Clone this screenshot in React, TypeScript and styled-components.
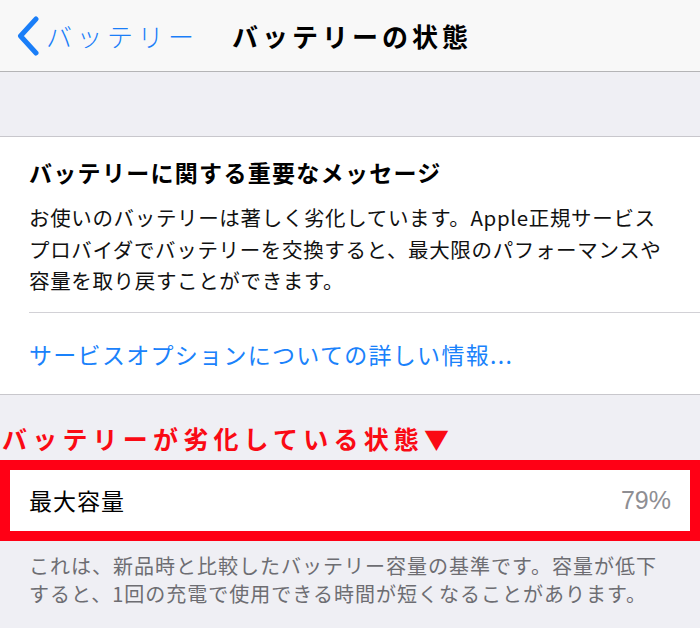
import React from "react";
import styled, { createGlobalStyle } from "styled-components";

const GlobalStyle = createGlobalStyle`
  html, body {
    margin: 0;
    padding: 0;
    background: #efeff4;
  }
  body {
    font-family: "Noto Sans CJK JP", "Noto Sans", "Liberation Sans", sans-serif;
    -webkit-font-smoothing: antialiased;
  }
`;

const Page = styled.div`
  width: 700px;
  height: 628px;
  overflow: hidden;
  background: #efeff4;
  display: flex;
  flex-direction: column;
`;

const NavBar = styled.header`
  height: 71px;
  flex: none;
  background: #f8f8f8;
  border-bottom: 1px solid #b4b4b6;
  display: flex;
  align-items: center;
  padding-left: 16px;
`;

const BackButton = styled.div`
  display: flex;
  align-items: center;
  gap: 6px;
  color: #1a7ef8;
  width: 216px;
  flex: none;
`;

const BackLabel = styled.span`
  font-size: 26px;
  font-weight: 300;
  letter-spacing: 4.5px;
  line-height: 1;
`;

const Title = styled.h1`
  margin: 0;
  font-size: 26px;
  font-weight: 700;
  letter-spacing: 4px;
  color: #000;
  line-height: 1;
`;

const Spacer = styled.div<{ $h: number }>`
  height: ${(p) => p.$h}px;
  flex: none;
`;

const Card = styled.section`
  background: #fff;
  border-top: 1px solid #c8c7cc;
  border-bottom: 1px solid #c8c7cc;
  padding-left: 29px;
  flex: none;
`;

const MessageBlock = styled.div`
  padding: 18px 0 15px;
`;

const Heading = styled.h2`
  margin: 0;
  font-size: 23px;
  font-weight: 700;
  line-height: 34px;
  color: #000;
  letter-spacing: 1.3px;
`;

const Body = styled.p`
  margin: 13px 0 0;
  font-size: 20.5px;
  line-height: 31.5px;
  color: #111;
  letter-spacing: 0.65px;
`;

const Line = styled.span`
  display: block;
  white-space: nowrap;
`;

const Divider = styled.div`
  height: 1px;
  background: #d2d1d6;
`;

const LinkRow = styled.div`
  height: 81px;
  display: flex;
  align-items: center;
  font-size: 23px;
  color: #1a82fb;
  letter-spacing: 1.3px;
  padding-top: 2px;
  box-sizing: border-box;
`;

const Annotation = styled.div`
  height: 65px;
  flex: none;
  display: flex;
  align-items: flex-end;
  padding: 0 0 9px 2px;
  box-sizing: border-box;
  color: #fa0a14;
  font-size: 25px;
  font-weight: 700;
  letter-spacing: 5.2px;
  line-height: 1;
`;

const HighlightBox = styled.div`
  border: 10px solid #ff0015;
  background: #fff;
  height: 61px;
  flex: none;
  display: flex;
  align-items: center;
  justify-content: space-between;
  padding: 0 19px 0 19px;
`;

const CellLabel = styled.span`
  font-size: 23px;
  color: #000;
  letter-spacing: 1px;
`;

const CellValue = styled.span`
  font-family: "Liberation Sans", "Noto Sans", sans-serif;
  font-size: 25px;
  color: #8e8e93;
`;

const Footer = styled.p`
  margin: 0;
  padding: 11px 0 0 29px;
  font-size: 20px;
  line-height: 28.5px;
  color: #6d6d72;
  letter-spacing: 1px;
`;

const Chevron = () => (
  <svg width="24" height="40" viewBox="0 0 24 40" aria-hidden="true">
    <path
      d="M20 3 L4.5 20 L20 37"
      fill="none"
      stroke="currentColor"
      strokeWidth="5"
      strokeLinecap="round"
      strokeLinejoin="round"
    />
  </svg>
);

export default function App() {
  return (
    <Page>
      <GlobalStyle />
      <NavBar>
        <BackButton>
          <Chevron />
          <BackLabel>バッテリー</BackLabel>
        </BackButton>
        <Title>バッテリーの状態</Title>
      </NavBar>
      <Spacer $h={64} />
      <Card>
        <MessageBlock>
          <Heading>バッテリーに関する重要なメッセージ</Heading>
          <Body>
            <Line>お使いのバッテリーは著しく劣化しています。Apple正規サービス</Line>
            <Line>プロバイダでバッテリーを交換すると、最大限のパフォーマンスや</Line>
            <Line>容量を取り戻すことができます。</Line>
          </Body>
        </MessageBlock>
        <Divider />
        <LinkRow>サービスオプションについての詳しい情報...</LinkRow>
      </Card>
      <Annotation>バッテリーが劣化している状態▼</Annotation>
      <HighlightBox>
        <CellLabel>最大容量</CellLabel>
        <CellValue>79%</CellValue>
      </HighlightBox>
      <Footer>
        <Line>これは、新品時と比較したバッテリー容量の基準です。容量が低下</Line>
        <Line>すると、1回の充電で使用できる時間が短くなることがあります。</Line>
      </Footer>
    </Page>
  );
}
